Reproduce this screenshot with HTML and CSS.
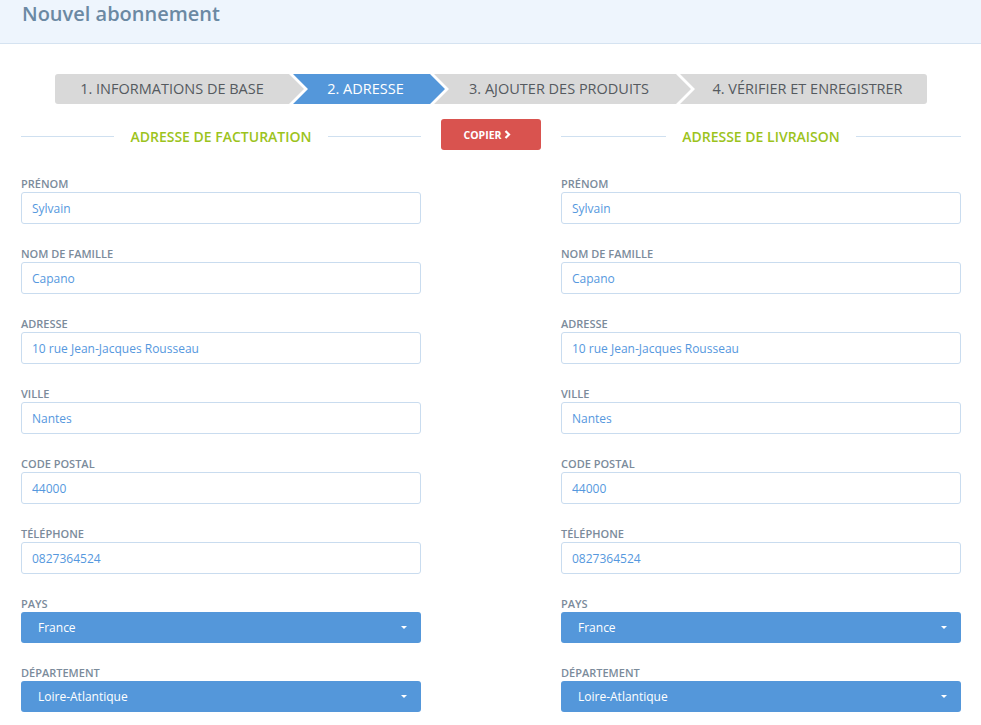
FILE: index.html
```html
<!DOCTYPE html>
<html lang="fr">
<head>
<meta charset="utf-8">
<title>Nouvel abonnement</title>
<link rel="stylesheet" href="styles.css">
</head>
<body>
<header class="page-header">
  <h1 class="page-title">Nouvel abonnement</h1>
</header>
<main class="content">
  <nav class="steps">
    <div class="step step-first">1. INFORMATIONS DE BASE</div>
    <div class="step step-mid step-active step-2">2. ADRESSE</div>
    <div class="step step-mid step-3">3. AJOUTER DES PRODUITS</div>
    <div class="step step-last">4. VÉRIFIER ET ENREGISTRER</div>
  </nav>

  <div class="address-grid">
    <section class="address-col">
      <div class="section-title"><span class="rule"></span><h2>ADRESSE DE FACTURATION</h2><span class="rule"></span></div>
      <div class="field"><label>PRÉNOM</label><input class="text-input" type="text" value="Sylvain"></div>
      <div class="field"><label>NOM DE FAMILLE</label><input class="text-input" type="text" value="Capano"></div>
      <div class="field"><label>ADRESSE</label><input class="text-input" type="text" value="10 rue Jean-Jacques Rousseau"></div>
      <div class="field"><label>VILLE</label><input class="text-input" type="text" value="Nantes"></div>
      <div class="field"><label>CODE POSTAL</label><input class="text-input" type="text" value="44000"></div>
      <div class="field"><label>TÉLÉPHONE</label><input class="text-input" type="text" value="0827364524"></div>
      <div class="field field-select"><label>PAYS</label><div class="select">France</div></div>
      <div class="field field-select"><label>DÉPARTEMENT</label><div class="select">Loire-Atlantique</div></div>
    </section>

    <div class="copy-col">
      <button class="copy-btn" type="button">COPIER <svg class="chev" width="7" height="9" viewBox="0 0 7 9"><path d="M1.5 1 L5 4.5 L1.5 8" fill="none" stroke="#fff" stroke-width="2.2"/></svg></button>
    </div>

    <section class="address-col">
      <div class="section-title"><span class="rule"></span><h2>ADRESSE DE LIVRAISON</h2><span class="rule"></span></div>
      <div class="field"><label>PRÉNOM</label><input class="text-input" type="text" value="Sylvain"></div>
      <div class="field"><label>NOM DE FAMILLE</label><input class="text-input" type="text" value="Capano"></div>
      <div class="field"><label>ADRESSE</label><input class="text-input" type="text" value="10 rue Jean-Jacques Rousseau"></div>
      <div class="field"><label>VILLE</label><input class="text-input" type="text" value="Nantes"></div>
      <div class="field"><label>CODE POSTAL</label><input class="text-input" type="text" value="44000"></div>
      <div class="field"><label>TÉLÉPHONE</label><input class="text-input" type="text" value="0827364524"></div>
      <div class="field field-select"><label>PAYS</label><div class="select">France</div></div>
      <div class="field field-select"><label>DÉPARTEMENT</label><div class="select">Loire-Atlantique</div></div>
    </section>
  </div>
</main>
</body>
</html>
```

FILE: styles.css
```css
* { box-sizing: border-box; }

html, body {
  margin: 0;
  padding: 0;
  background: #ffffff;
  font-family: "Open Sans", "Liberation Sans", sans-serif;
}

.page-header {
  height: 44px;
  background: #eef5fd;
  border-bottom: 1px solid #d5e3f1;
  padding: 0 22px;
}

.page-title {
  margin: 0;
  font-size: 20px;
  font-weight: 600;
  line-height: 28px;
  color: #6b89a3;
}

.content {
  padding: 30px 20px 0 21px;
}

.steps {
  display: flex;
  height: 30px;
  margin-left: 34px;
}

.step {
  height: 30px;
  line-height: 30px;
  font-size: 14.5px;
  color: #555a5f;
  background: #d9d9d9;
  text-align: center;
  white-space: nowrap;
  flex: none;
}

.step-first {
  width: 249px;
  padding-right: 15px;
  border-radius: 3px 0 0 3px;
  clip-path: polygon(0 0, calc(100% - 15px) 0, 100% 50%, calc(100% - 15px) 100%, 0 100%);
}

.step-mid {
  margin-left: -11px;
  padding-left: 8px;
  padding-right: 15px;
  clip-path: polygon(0 0, calc(100% - 15px) 0, 100% 50%, calc(100% - 15px) 100%, 0 100%, 15px 50%);
}

.step-2 { width: 152px; }
.step-3 { width: 257px; }

.step-last {
  width: 247px;
  margin-left: -11px;
  padding-left: 8px;
  border-radius: 0 3px 3px 0;
  clip-path: polygon(0 0, 100% 0, 100% 100%, 0 100%, 15px 50%);
}

.step-active {
  background: #5497da;
  color: #ffffff;
}

.address-grid {
  display: grid;
  grid-template-columns: 400px 140px 400px;
  margin-top: 15px;
}

.section-title {
  display: flex;
  align-items: center;
  gap: 16px;
  height: 31px;
  margin-bottom: 27px;
}

.section-title h2 {
  margin: 0;
  font-size: 14px;
  font-weight: 600;
  color: #9cc31c;
  white-space: nowrap;
  padding-top: 4px;
}

.rule {
  flex: 1;
  height: 1px;
  background: #cfe0f0;
  margin-top: 3px;
}

.copy-col {
  display: flex;
  justify-content: center;
  align-items: flex-start;
}

.copy-btn {
  width: 100px;
  height: 31px;
  border: 0;
  border-radius: 3px;
  background: #d9534f;
  color: #ffffff;
  font-family: "Open Sans", "Liberation Sans", sans-serif;
  font-size: 10.5px;
  font-weight: 700;
  display: flex;
  align-items: center;
  justify-content: center;
  gap: 3px;
  padding: 0 7px 0 0;
}

.chev { display: block; }

.field {
  margin-bottom: 23px;
}

.field label {
  display: block;
  font-size: 11px;
  font-weight: 600;
  line-height: 14px;
  color: #7b8b9b;
  margin-bottom: 1px;
}

.text-input {
  display: block;
  width: 100%;
  height: 32px;
  border: 1px solid #c9dcef;
  border-radius: 3px;
  padding: 0 10px;
  font-family: "Open Sans", "Liberation Sans", sans-serif;
  font-size: 12px;
  color: #5598de;
  background: #ffffff;
  outline: none;
}

.select {
  position: relative;
  height: 31px;
  line-height: 31px;
  border-radius: 3px;
  background: #5497da;
  color: #ffffff;
  font-size: 12px;
  padding-left: 17px;
}

.select::after {
  content: "";
  position: absolute;
  right: 14px;
  top: 14px;
  border-left: 3.5px solid transparent;
  border-right: 3.5px solid transparent;
  border-top: 3.5px solid #ffffff;
}
```
